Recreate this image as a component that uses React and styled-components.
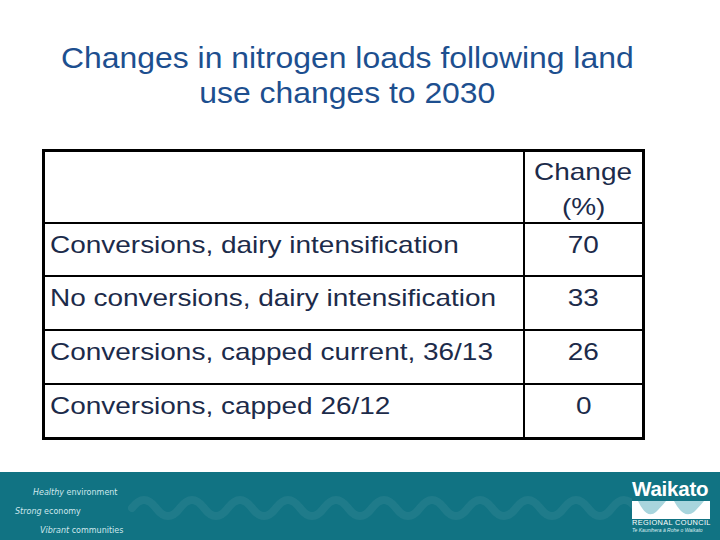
import React from 'react';
import styled, { createGlobalStyle } from 'styled-components';

const sans = `'Liberation Sans', Arial, Helvetica, sans-serif`;

const GlobalStyle = createGlobalStyle`
  html, body {
    margin: 0;
    padding: 0;
    background: #ffffff;
    font-family: ${sans};
  }
`;

const Slide = styled.div`
  width: 720px;
  height: 540px;
  display: flex;
  flex-direction: column;
  overflow: hidden;
  background: #fff;
  font-family: ${sans};
`;

const Title = styled.h1`
  margin: 0;
  padding: 40px 0 0 0;
  width: 694px;
  display: flex;
  flex-direction: column;
  align-items: center;
  font-family: ${sans};
  font-size: 30px;
  line-height: 35px;
  font-weight: normal;
  color: #1d4f8f;
`;

const Stretch = styled.span`
  display: inline-block;
  white-space: nowrap;
  transform: scaleX(${(p) => p.$sx});
  transform-origin: ${(p) => p.$origin || 'left'} center;
`;

const Table = styled.div`
  margin: 39px 0 0 42px;
  width: 603px;
  box-sizing: border-box;
  border: 3px solid #000;
  display: flex;
  flex-direction: column;
`;

const Row = styled.div`
  display: grid;
  grid-template-columns: 478px 1fr;
  height: ${(p) => p.$h}px;
  border-bottom: ${(p) => (p.$last ? 'none' : '2px solid #000')};
`;

const Cell = styled.div`
  padding: ${(p) => (p.$pad ? p.$pad : 3)}px 0 0 ${(p) => (p.$num ? 0 : 5)}px;
  font-family: ${sans};
  font-size: 24px;
  line-height: 35px;
  color: #1c2b4a;
  display: flex;
  flex-direction: column;
  align-items: ${(p) => (p.$num ? 'center' : 'flex-start')};
  border-left: ${(p) => (p.$num ? '2px solid #000' : 'none')};
  white-space: nowrap;
`;

const Footer = styled.footer`
  margin-top: auto;
  height: 68px;
  background: #117383;
  display: flex;
  align-items: stretch;
`;

const Slogans = styled.div`
  width: 128px;
  flex: none;
  padding-top: 11px;
  display: flex;
  flex-direction: column;
`;

const Slogan = styled.span`
  font-family: 'DejaVu Sans', sans-serif;
  font-size: 8px;
  line-height: 19px;
  color: #cfe8ed;
  padding-left: ${(p) => p.$indent}px;
  white-space: nowrap;
  em {
    font-style: italic;
  }
`;

const Wave = styled.svg`
  flex: 1;
  height: 68px;
`;

const Logo = styled.div`
  width: 88px;
  flex: none;
  padding: 6px 0 0 0;
  display: flex;
  flex-direction: column;
  align-items: flex-start;
  font-family: ${sans};
`;

const LogoName = styled.span`
  font-size: 20.5px;
  line-height: 22px;
  font-weight: bold;
  color: #fff;
  letter-spacing: -0.2px;
`;

const Council = styled.span`
  font-size: 7.4px;
  line-height: 8px;
  color: #fff;
  letter-spacing: 0.35px;
  white-space: nowrap;
`;

const Maori = styled.span`
  font-size: 5px;
  line-height: 7px;
  font-style: italic;
  color: #dceff2;
  white-space: nowrap;
`;

const rows = [
  ['Conversions, dairy intensification', '70'],
  ['No conversions, dairy intensification', '33'],
  ['Conversions, capped current, 36/13', '26'],
  ['Conversions, capped 26/12', '0'],
];

const SX = 1.165;

function wavePath(x0, x1, y, amp, len) {
  let d = `M${x0},${y}`;
  for (let x = x0; x < x1; x += len) {
    d += ` q${len / 4},${-amp * 2} ${len / 2},0 q${len / 4},${amp * 2} ${len / 2},0`;
  }
  return d;
}

export default function App() {
  return (
    <Slide>
      <GlobalStyle />
      <Title>
        <Stretch $sx={1.063} $origin="center">
          Changes in nitrogen loads following land
        </Stretch>
        <Stretch $sx={1.063} $origin="center">
          use changes to 2030
        </Stretch>
      </Title>
      <Table>
        <Row $h={70}>
          <Cell />
          <Cell $num $pad={2}>
            <Stretch $sx={SX} $origin="center">Change</Stretch>
            <Stretch $sx={SX} $origin="center">(%)</Stretch>
          </Cell>
        </Row>
        {rows.map(([label, value], i) => (
          <Row key={label} $h={i === 0 ? 51 : 52} $last={i === rows.length - 1}>
            <Cell>
              <Stretch $sx={SX}>{label}</Stretch>
            </Cell>
            <Cell $num>
              <Stretch $sx={SX} $origin="center">{value}</Stretch>
            </Cell>
          </Row>
        ))}
      </Table>
      <Footer>
        <Slogans>
          <Slogan $indent={33}>
            <em>Healthy</em> environment
          </Slogan>
          <Slogan $indent={15}>
            <em>Strong</em> economy
          </Slogan>
          <Slogan $indent={40}>
            <em>Vibrant</em> communities
          </Slogan>
        </Slogans>
        <Wave viewBox="0 0 504 68" preserveAspectRatio="none">
          <path
            d={wavePath(4, 500, 36, 8, 48)}
            fill="none"
            stroke="rgba(255,255,255,0.06)"
            strokeWidth="8"
            strokeLinecap="round"
          />
        </Wave>
        <Logo>
          <LogoName>Waikato</LogoName>
          <svg width="78" height="19" viewBox="0 0 78 19">
            <rect x="0" y="1" width="78" height="18" fill="#ffffff" />
            <path
              d="M6,1 Q15,20 24,12 Q30,6 34,1 Z M42,1 Q52,20 62,12 Q68,6 72,1 Z"
              fill="#a8d5dd"
            />
          </svg>
          <Council>REGIONAL COUNCIL</Council>
          <Maori>Te Kaunihera ā Rohe o Waikato</Maori>
        </Logo>
      </Footer>
    </Slide>
  );
}
